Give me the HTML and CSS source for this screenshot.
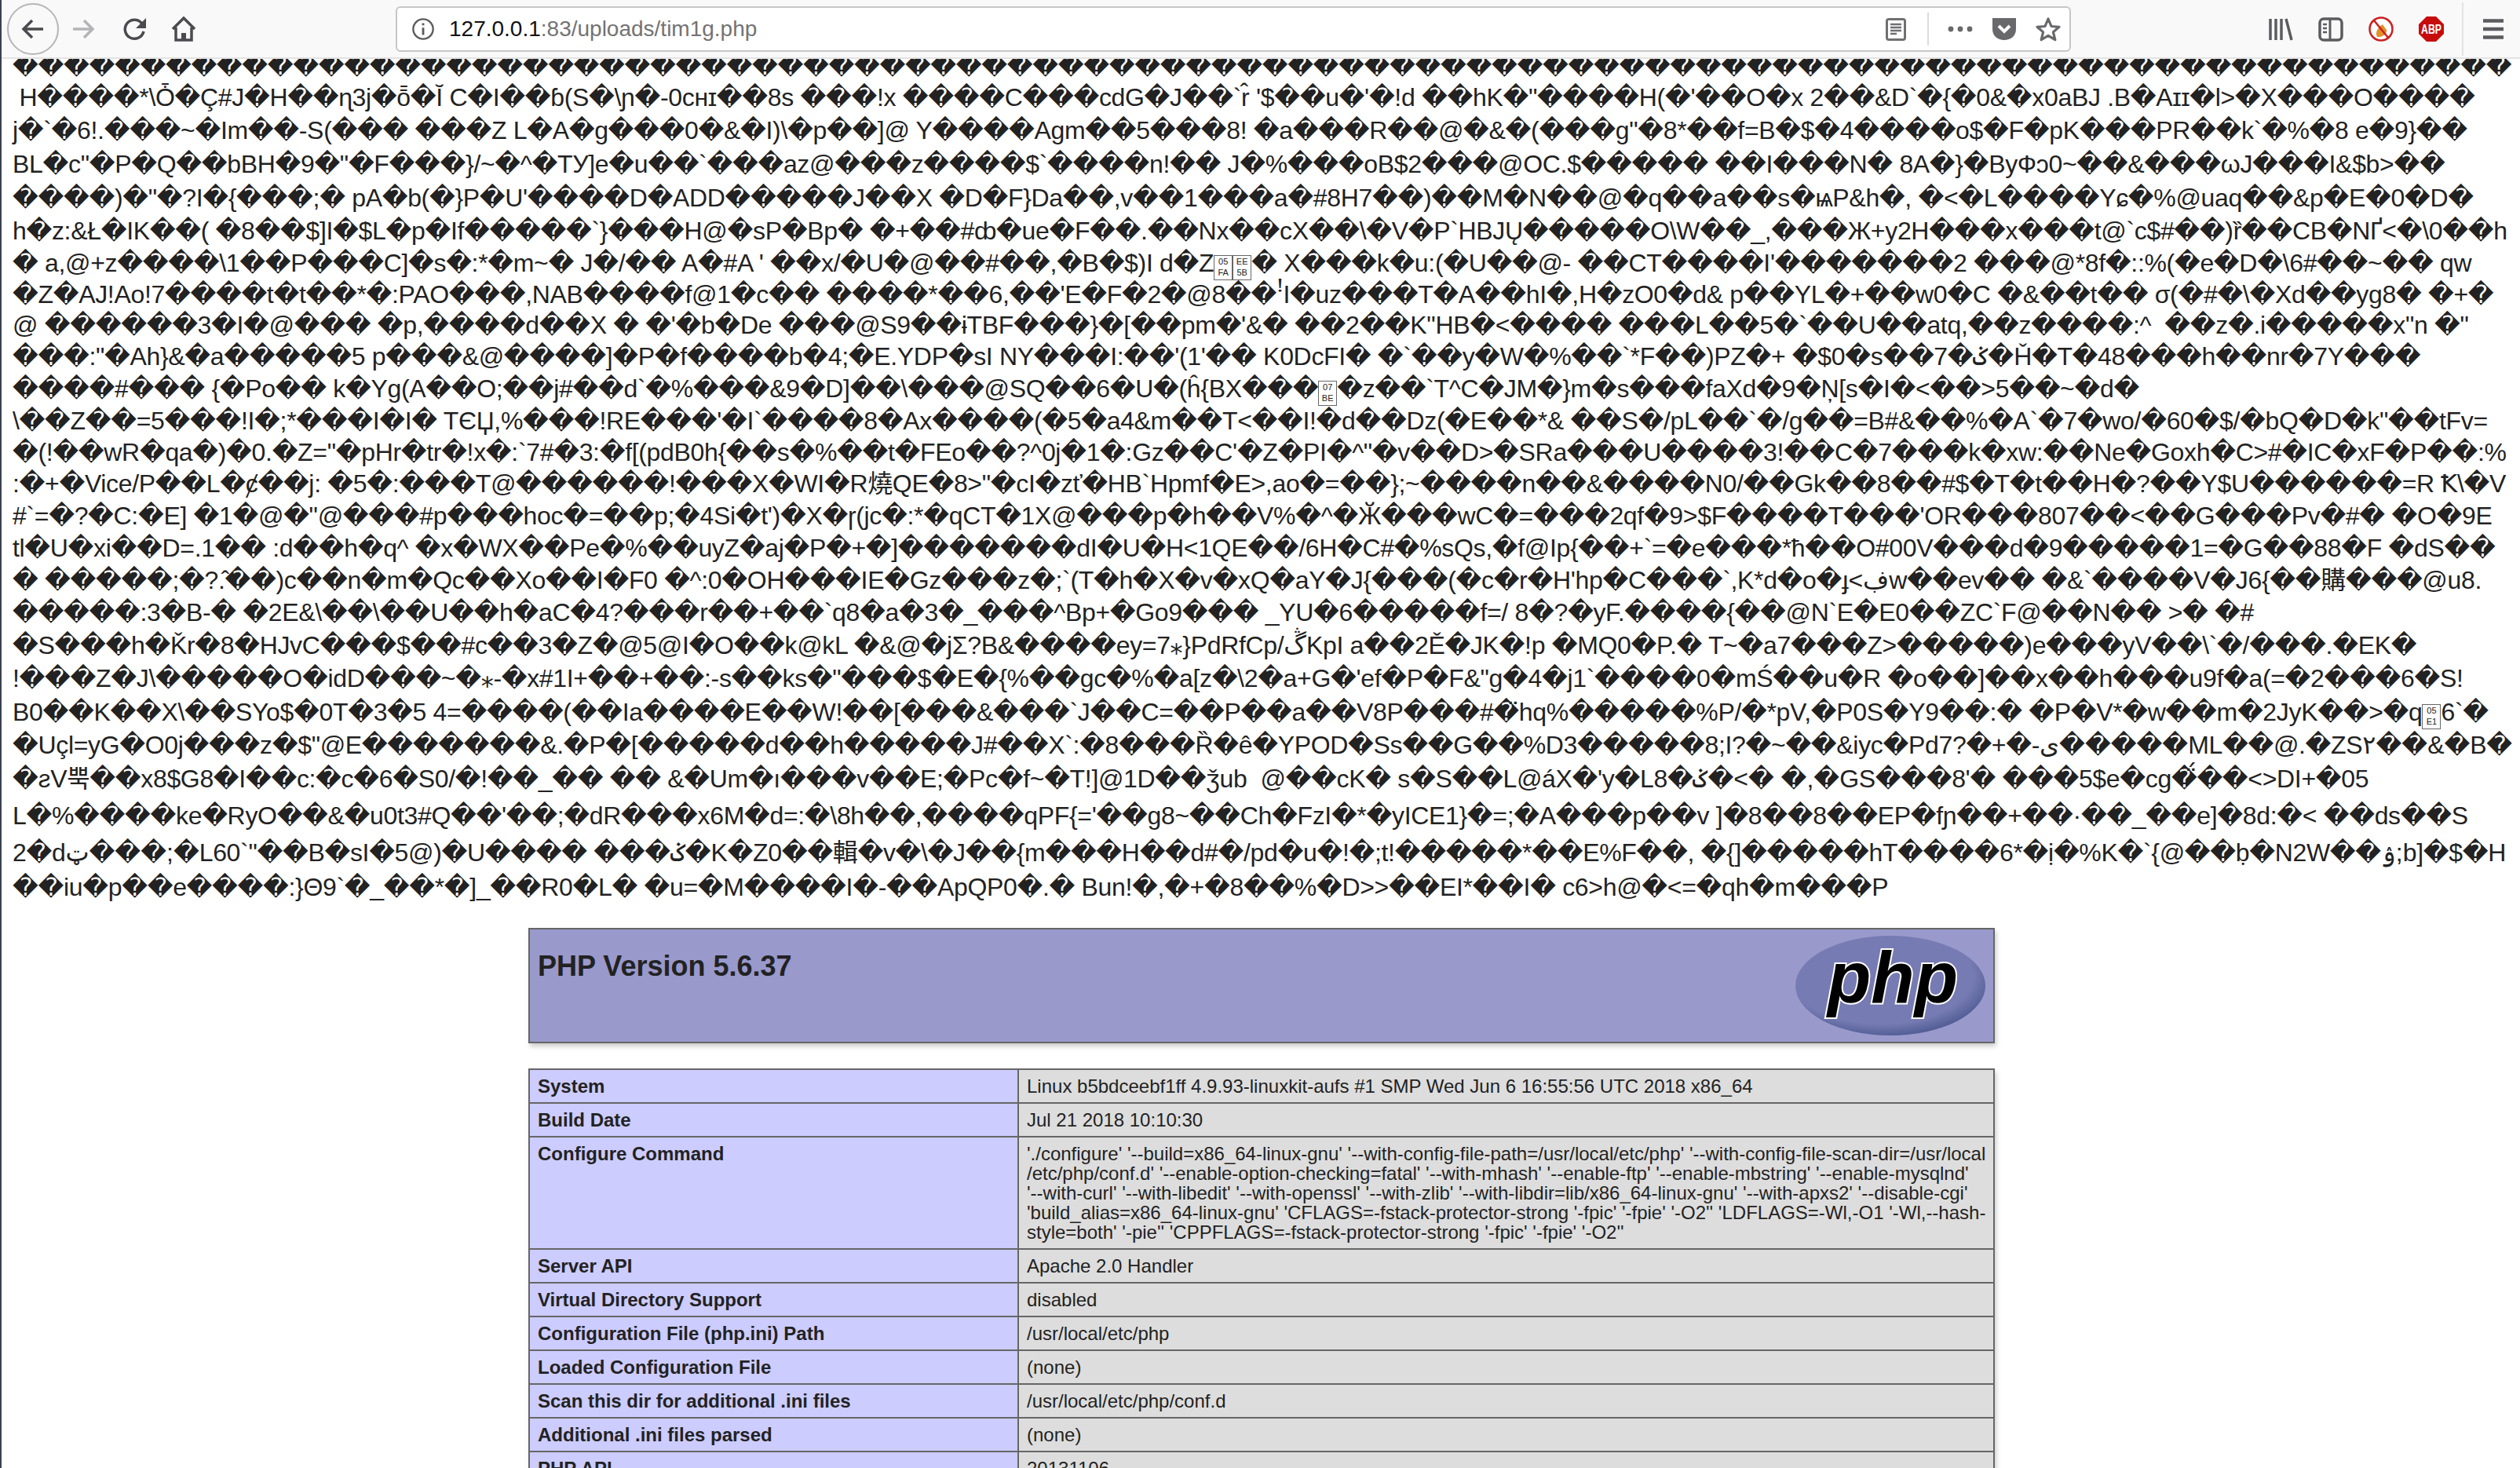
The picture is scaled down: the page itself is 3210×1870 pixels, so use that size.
FILE: index.html
```html
<!DOCTYPE html>
<html lang="en">
<head>
    <meta charset="UTF-8">
    <title>127.0.0.1:83/uploads/tim1g.php</title>
    <link rel="stylesheet" href="styles.css">
</head>
<body>

<div class="window">

    <div class="toolbar">
        <div class="back-btn">
            <svg class="icon" viewBox="0 0 32 32"><path d="M29 16H5M15 5 4 16l11 11" fill="none" stroke="#4a4a4f" stroke-width="3.5"/></svg>
        </div>
        <svg class="icon forward" viewBox="0 0 32 32"><path d="M3 16h24M17 5l11 11-11 11" fill="none" stroke="#b4b4b6" stroke-width="3.5"/></svg>
        <svg class="icon reload" viewBox="0 0 32 32"><path d="M27 19a12 12 0 1 1-3-11l4 4" fill="none" stroke="#4a4a4f" stroke-width="3.5"/><path d="M30 2v13H17z" fill="#4a4a4f"/></svg>
        <svg class="icon home" viewBox="0 0 32 32"><path d="M2 16 16 2l14 14M6 14v16h20V14" fill="none" stroke="#4a4a4f" stroke-width="3.5"/><path d="M13 30v-9h6v9z" fill="#4a4a4f"/></svg>

        <div class="urlbar">
            <svg class="icon info" viewBox="0 0 32 32"><circle cx="16" cy="16" r="13.5" fill="none" stroke="#5a5a5c" stroke-width="2.5"/><path d="M16 14v10M16 8v3" stroke="#5a5a5c" stroke-width="3"/></svg>
            <div class="url"><span class="host">127.0.0.1</span>:83/uploads/tim1g.php</div>
            <svg class="icon reader" viewBox="0 0 32 32"><rect x="3" y="2" width="26" height="29" rx="4" fill="#707073"/><rect x="6" y="5" width="20" height="23" fill="#fff"/><path d="M9 10h14M9 14h14M9 18h14M9 22h8" stroke="#707073" stroke-width="2.4"/></svg>
            <div class="urlbar-sep"></div>
            <svg class="icon dots" viewBox="0 0 32 32"><circle cx="4" cy="16" r="3.4" fill="#69696c"/><circle cx="16" cy="16" r="3.4" fill="#69696c"/><circle cx="28" cy="16" r="3.4" fill="#69696c"/></svg>
            <svg class="icon pocket" viewBox="0 0 32 32"><path d="M1 2h30v14c0 9-7 14-15 14S1 25 1 16z" fill="#69696c"/><path d="m9 12 7 7 7-7" fill="none" stroke="#fff" stroke-width="4"/></svg>
            <svg class="icon star" viewBox="0 0 32 32"><path d="m16 3 4 9.500 10 .8-7.600 6.600 2.400 9.800-8.800-5.300-8.800 5.300 2.400-9.800L2 13.300l10-.8z" fill="none" stroke="#69696c" stroke-width="3.200" stroke-linejoin="round"/></svg>
        </div>

        <div class="tools">
            <svg class="icon" viewBox="0 0 32 32"><path d="M3 3v27M10 3v27M17 3v27M23 3l7 27" fill="none" stroke="#5c5c5f" stroke-width="3.500"/></svg>
            <svg class="icon" viewBox="0 0 32 32"><rect x="2" y="3" width="28" height="27" rx="5" fill="none" stroke="#5c5c5f" stroke-width="3.500"/><path d="M15 3v27" stroke="#5c5c5f" stroke-width="3"/><path d="M6 10h5M6 15h5M6 20h5" stroke="#5c5c5f" stroke-width="2.500"/></svg>
            <svg class="icon" viewBox="0 0 32 32"><circle cx="16" cy="16" r="14.500" fill="#fff" stroke="#cc1f1f" stroke-width="2.500"/><path d="M11 26c-3-6 1-12 7-16l2 3 3 4c1 5-5 10-12 9z" fill="#e2912b"/><path d="M7 5l18 22" stroke="#cc1f1f" stroke-width="2.500"/></svg>
            <svg class="icon" viewBox="0 0 32 32"><path d="M10 0h12l10 10v12L22 32H10L0 22V10z" fill="#c70d0c"/><text x="16" y="22" class="abp" text-anchor="middle" textLength="26" lengthAdjust="spacingAndGlyphs">ABP</text></svg>
            <div class="tools-sep"></div>
            <svg class="menu" viewBox="0 0 26 26"><path d="M0 2.500h26M0 13h26M0 23.500h26" stroke="#5c5c5f" stroke-width="4.500"/></svg>
        </div>
    </div>

    <div class="page">
        <div class="garbage">
            <div class="ln ln-first">��������������������������������������������������������������������������������������������������</div>
            <div class="ln h42"> H����*\Ȱ�Ç#J�H��ɳ3j�ō̄�Ĭ C�I��ɓ(S�\ɲ�-0снɪ��8s ���!x ����C���cdG�J��`r̂ '$��u�'�!d ��hK�"����H(�'��O�x 2��&amp;D`�{�0&amp;�x0aBJ .B�Aɪɪ�l&gt;�X���O����</div>
            <div class="ln h43">j�`�6!.���~�Im��-S(��� ���Z L�A�g���0�&amp;�I)\�p��]@ Y����Agm��5���8! �a���R��@�&amp;�(���g"�8*��f=B�$�4����o$�F�pK���PR��k`�%�8 e�9}��</div>
            <div class="ln h43">BL�c"�P�Q��bBH�9�"�F���}/~�^�TУ]e�u��`���az@���z����$`����n!�� J�%���oB$2���@OC.$����� ��I���N� 8A�}�ByФɔ0~��&amp;���ωJ���I&amp;$b&gt;��</div>
            <div class="ln h43">����)�"�?I�{���;� pA�b(�}P�U'����D�ADD�����J��X �D�F}Da��,v��1���a�#8H7��)��M�N��@�q��a��s�ѩP&amp;h�, �&lt;�L����Yɕ�%@uaq��&amp;p�E�0�D�</div>
            <div class="ln">h�z:&amp;Ł�IK��( �8��$]I�$L�p�If�����`}���H@�sP�Bp� �+��#ȸ�ue�F��.��Nx��cX��\�V�P`HBJŲ�����O\W��_,���Ж+y2H���x���t@`c$#��)ȑ��CB�NҐ&lt;�\0��h</div>
            <div class="ln">� a,@+z����\1��P���C]�s�:*�m~� J�/�� A�#A ' ��x/�U�@��#��,�B�$)I d�Z<span class="tofu">05<br>FA</span><span class="tofu">EE<br>5B</span>� X���k�u:(�U��@- ��CT����I'�������2 ���@*8f�::%(�e�D�\6#��~�� qw</div>
            <div class="ln h38">�Z�AJ!Ao!7����t�t��*�:PAO���,NAB����f@1�c�� ����*��6,��'E�F�2�@8��ꜝI�uz���T�A��hI�,H�zO0�d&amp; p��YL�+��w0�C �&amp;��t�� σ(�#�\�Xd��yg8� �+�</div>
            <div class="ln h40">@ ������3�I�@��� �p,����d��X � �'�b�De ���@S9��ɨTBF���}�[��pm�'&amp;� ��2��K"HB�&lt;���� ���L��5�`��U��atq,��z����:^  ��z�.i�����x"n �"</div>
            <div class="ln">���:"�Ah}&amp;�a�����5 p���&amp;@����]�P�f����b�4;�E.YDP�sI NY���I:��'(1'�� K0DcFI� �`��y�W�%��`*F��)PZ�+ �$0�s��7�ݢ�Ȟ�T�48���h��nr�7Y���</div>
            <div class="ln">����#��� {�Po�� k�Yg(A��O;��j#��d`�%���&amp;9�D]��\���@SQ��6�U�(ĥ{BX���<span class="tofu">07<br>BE</span>�z��`T^C�JM�}m�s���faXd�9�Ņ[s�I�&lt;��&gt;5��~�d�</div>
            <div class="ln h40">\��Z��=5���!I�;*���I�I� TЄЏ,%���!RE���'�I`����8�Ax����(�5�a4&amp;m��T&lt;��I!�d��Dz(�E��*&amp; ��S�/pL��`�/g��=B#&amp;��%�A`�7�wo/�60�$/�bQ�D�k"��tFv=</div>
            <div class="ln h40">�(!��wR�qa�)�0.�Z="�pHr�tr�!x�:`7#�3:�f[(pdB0h{��s�%��t�FEo��?^0j�1�:Gz��C'�Z�PI�^"�v��D&gt;�SRa���U����3!��C�7���k�xw:��Ne�Goxh�C&gt;#�IC�xF�P��:%</div>
            <div class="ln">:�+�Vice/P��L�ȼ��j: �5�:���T@������!���X�WI�R燒QE�8&gt;"�cI�zť�HB`Hpmf�E&gt;,ao�=��};~����n��&amp;����N0/��Gk��8��#$�T�t��H�?��Y$U������=R Ꝁ\�V</div>
            <div class="ln">#`=�?�C:�E] �1�@�"@���#p���hoc�=��p;�4Si�t')�X�ɼ(jc�:*�qCT�1X@���p�h��V%�^�Ӂ���wC�=���2qf�9&gt;$F����T���'OR���807��&lt;��G���Pv�#� �O�9E</div>
            <div class="ln">tl�U�xi��D=.1�� :d��h�q^ �x�WX��Pe�%��uyZ�aj�P�+�]�������dI�U�H&lt;1QE��/6H�C#�%sQs,�f@Ip{��+`=�e���*ħ��O#00V���d�9�����1=�G��88�F �dS��</div>
            <div class="ln">� �����;�?.̂��)c��n�m�Qc��Xo��I�F0 �^:0�OH���IE�Gz���z�;`(T�h�X�v�xQ�aY�J{���(�c�r�H'hp�C���`,K*d�o�ɟ&lt;ڣw��ev�� �&amp;`����V�J6{��購���@u8.</div>
            <div class="ln">�����:3�B-� �2E&amp;\��\��U��h�aC�4?���r��+��`q8�a�3�_���^Bp+�Go9��� _YU�6�����f=/ 8�?�yF.����{��@N`E�E0��ZC`F@��N�� &gt;� �#</div>
            <div class="ln h42">�S���h�Ǩr�8�HJvC���$��#c��3�Z�@5@I�O��k@kL �&amp;@�jΣ?B&amp;����ey=7⁎}PdRfCp/ڴKpI a��2Ě�JK�!p �MQ0�P.� T~�a7���Z&gt;�����)e���yV��\`�/���.�EK�</div>
            <div class="ln h43">!���Z�J\�����O�idD���~�⁎-�x#1I+��+��:-s��ks�"���$�E�{%��gc�%�a[z�\2�a+G�'ef�P�F&amp;"g�4�j1`����0�mŚ��u�R �o��]��x��h���u9f�a(=�2���6�S!</div>
            <div class="ln h42">B0��K��X\��SYo$�0T�3�5 4=����(��Ia����E��W!��[���&amp;���`J��C=��P��a��V8P���#�̈hq%�����%P/�*pV,�P0S�Y9��:� �P�V*�w��m�2JyK��&gt;�q<span class="tofu">05<br>E1</span>6`�</div>
            <div class="ln h42">�Uçl=yG�O0j���z�$"@E�������&amp;.�P�[�����d��h�����J#��X`:�8���Ȑ�ê�YPOD�Ss��G��%D3�����8;I?�~��&amp;iyc�Pd7?�+�-ى�����ML��@.�ZS٢��&amp;�B�</div>
            <div class="ln h45">�ƨV뿍��x8$G8�I��c:�c�6�S0/�!��_�� �� &amp;�Um�ı���v��E;�Pc�f~�T!]@1D��ǯub  @��cK� s�S��L@áX�'y�L8�ݢ�&lt;� �,�GS���8'� ���5$e�cg�̈́��&lt;&gt;DI+�05</div>
            <div class="ln h49">L�%����ke�RyO��&amp;�u0t3#Q��'��;�dR���x6M�d=:�\8h��,����qPF{='��g8~��Ch�FzI�*�yICE1}�=;�A���p��v ]�8��8��EP�fɲ��+��·��_��e]�8d:�&lt; ��ds��S</div>
            <div class="ln h45">2�dټ���;�L60`"��B�ѕI�5@)�U���� ���ݢ�K�Z0��輯�v�\�J��{m���H��d#�/pd�u�!�;t!�����*��E%F��, �{]�����hT����6*�ị�%K�`{@��ḅ�N2W��ۉ;b]�$�H</div>
            <div class="ln h42">��iu�p��e����:}Θ9`�_��*�]_��R0�L� �u=�M����I�-��ApQP0�.� Bun!�,�+�8��%�D&gt;&gt;��EI*��I� c6&gt;h@�&lt;=�qh�m���P</div>
        </div>

        <table class="phpinfo head-table">
            <tr class="h">
                <td>
                    <svg class="php-logo" viewBox="0 0 242 127">
                        <defs>
                            <radialGradient id="logoFill" cx="45%" cy="40%" r="62%">
                                <stop offset="0.78" stop-color="#777bb3"/>
                                <stop offset="1" stop-color="#4f5b93"/>
                            </radialGradient>
                        </defs>
                        <ellipse cx="121" cy="63.500" rx="121" ry="63.500" fill="url(#logoFill)"/>
                        <text x="124" y="85" class="php-mark" text-anchor="middle" textLength="166" lengthAdjust="spacingAndGlyphs">php</text>
                    </svg>
                    <h1>PHP Version 5.6.37</h1>
                </td>
            </tr>
        </table>

        <table class="phpinfo">
            <tr><td class="e">System</td><td class="v">Linux b5bdceebf1ff 4.9.93-linuxkit-aufs #1 SMP Wed Jun 6 16:55:56 UTC 2018 x86_64</td></tr>
            <tr><td class="e">Build Date</td><td class="v">Jul 21 2018 10:10:30</td></tr>
            <tr><td class="e">Configure Command</td><td class="v">'./configure' '--build=x86_64-linux-gnu' '--with-config-file-path=/usr/local/etc/php' '--with-config-file-scan-dir=/usr/local<br>/etc/php/conf.d' '--enable-option-checking=fatal' '--with-mhash' '--enable-ftp' '--enable-mbstring' '--enable-mysqlnd'<br>'--with-curl' '--with-libedit' '--with-openssl' '--with-zlib' '--with-libdir=lib/x86_64-linux-gnu' '--with-apxs2' '--disable-cgi'<br>'build_alias=x86_64-linux-gnu' 'CFLAGS=-fstack-protector-strong '-fpic' '-fpie' '-O2'' 'LDFLAGS=-Wl,-O1 '-Wl,--hash-<br>style=both' '-pie'' 'CPPFLAGS=-fstack-protector-strong '-fpic' '-fpie' '-O2''</td></tr>
            <tr><td class="e">Server API</td><td class="v">Apache 2.0 Handler</td></tr>
            <tr><td class="e">Virtual Directory Support</td><td class="v">disabled</td></tr>
            <tr><td class="e">Configuration File (php.ini) Path</td><td class="v">/usr/local/etc/php</td></tr>
            <tr><td class="e">Loaded Configuration File</td><td class="v">(none)</td></tr>
            <tr><td class="e">Scan this dir for additional .ini files</td><td class="v">/usr/local/etc/php/conf.d</td></tr>
            <tr><td class="e">Additional .ini files parsed</td><td class="v">(none)</td></tr>
            <tr><td class="e">PHP API</td><td class="v">20131106</td></tr>
        </table>
    </div>

</div>

</body>
</html>
```
FILE: styles.css
```css
html, body {
    margin: 0;
    height: 100%;
    overflow: hidden;
    background: #fff;
}
body {
    font-family: "Liberation Sans", "DejaVu Sans", "Noto Sans", "Noto Sans CJK SC", sans-serif;
    color: #222;
}
.window {
    display: flex;
    flex-direction: column;
    height: 1870px;
    border-left: 2px solid #3a4150;
    overflow: hidden;
}

/* browser chrome */
.toolbar {
    display: flex;
    align-items: center;
    flex: none;
    height: 73px;
    padding-left: 7px;
    background: #f9f9fa;
    border-bottom: 2px solid #e3e3e4;
}
.icon {
    width: 32px;
    height: 32px;
    flex: none;
}
.back-btn {
    display: flex;
    align-items: center;
    justify-content: center;
    flex: none;
    width: 66px;
    height: 66px;
    box-sizing: border-box;
    border: 2px solid #b6b6b7;
    border-radius: 50%;
}
.forward { margin-left: 15px; }
.reload { margin-left: 34px; }
.home { margin-left: 30px; }

.urlbar {
    display: flex;
    align-items: center;
    flex: none;
    box-sizing: border-box;
    width: 2134px;
    height: 58px;
    margin-left: 254px;
    padding: 0 11px 0 18px;
    background: #fff;
    border: 2px solid #c6c6c7;
    border-radius: 6px;
}
.info { width: 30px; height: 30px; }
.url {
    flex: 1;
    margin-left: 18px;
    font-size: 28px;
    color: #737373;
    white-space: nowrap;
}
.host { color: #111; }
.reader { margin-right: 24px; }
.urlbar-sep {
    width: 2px;
    height: 42px;
    background: #dcdcdd;
}
.dots { margin-left: 24px; }
.pocket { margin-left: 24px; }
.star { margin-left: 24px; }

.tools {
    display: flex;
    align-items: center;
    gap: 32px;
    margin-left: 251px;
}
.tools-sep {
    width: 2px;
    height: 68px;
    margin-left: -9px;
    background: #e3e3e4;
}
.menu {
    width: 26px;
    height: 26px;
    margin-left: -7px;
}
.abp {
    font-size: 16px;
    font-weight: bold;
    fill: #fff;
}

/* page body */
.page {
    flex: 1;
    overflow: hidden;
    padding-left: 2px;
}
.garbage {
    padding-left: 12px;
    font-size: 32px;
    letter-spacing: -0.33px; /* the replacement glyph runs wider here than in the original font */
}
.ln { height: 41px; line-height: 41px; white-space: pre; }
.ln-first { height: 37px; line-height: 37px; margin-top: -9px; }
.h38 { height: 38px; line-height: 38px; }
.h40 { height: 40px; line-height: 40px; }
.h42 { height: 42px; line-height: 42px; }
.h43 { height: 43px; line-height: 43px; }
.h45 { height: 45px; line-height: 45px; }
.h49 { height: 49px; line-height: 49px; }
.tofu {
    display: inline-block;
    box-sizing: border-box;
    width: 24px;
    height: 32px;
    border: 1px solid #666;
    font-size: 11px;
    line-height: 14px;
    letter-spacing: 0;
    text-align: center;
    vertical-align: -5px;
    white-space: normal;
}

/* phpinfo tables */
.phpinfo {
    width: 1868px;
    margin: 0 auto;
    border-collapse: collapse;
    table-layout: fixed;
    box-shadow: 2px 4px 6px #ccc;
    font-size: 24px;
    line-height: 25px;
}
.phpinfo td {
    padding: 8px 10px;
    border: 2px solid #666;
    vertical-align: top;
}
.head-table { margin-top: 31px; margin-bottom: 32px; }
.h td {
    height: 126px;
    background: #9999cc;
}
.h h1 {
    margin: 18px 0 0;
    font-size: 36px;
    line-height: 42px;
    font-weight: bold;
}
.php-logo {
    float: right;
    width: 242px;
    height: 127px;
}
.php-mark {
    font-size: 92px;
    font-weight: bold;
    font-style: italic;
    fill: #000;
    stroke: #fff;
    stroke-width: 4px;
    paint-order: stroke;
}
.e {
    width: 601px;
    background: #ccccff;
    font-weight: bold;
}
.v {
    background: #dddddd;
    white-space: nowrap;
}
```
